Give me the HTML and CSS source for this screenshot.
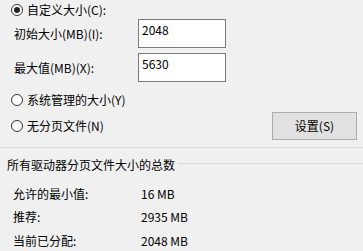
FILE: index.html
```html
<!DOCTYPE html>
<html lang="zh-CN">
<head>
<meta charset="utf-8">
<link rel="stylesheet" href="styles.css">
</head>
<body>
<div class="page">
  <div class="row r1">
    <span class="radio checked"></span><span class="rlabel">自定义大小(C):</span>
  </div>
  <div class="row r2">
    <span class="flabel">初始大小(MB)(I):</span><div class="input">2048</div>
  </div>
  <div class="row r3">
    <span class="flabel">最大值(MB)(X):</span><div class="input">5630</div>
  </div>
  <div class="row r4">
    <span class="radio"></span><span class="rlabel">系统管理的大小(Y)</span>
  </div>
  <div class="row r5">
    <span class="radio"></span><span class="rlabel">无分页文件(N)</span>
    <div class="spacer"></div>
    <div class="button">设置(S)</div>
  </div>
  <div class="sep"></div>
  <div class="group-title"><span class="gt">所有驱动器分页文件大小的总数</span><span class="gline"></span></div>
  <div class="stat s1"><span class="sk">允许的最小值:</span><span class="sv">16 MB</span></div>
  <div class="stat s2"><span class="sk">推荐:</span><span class="sv">2935 MB</span></div>
  <div class="stat s3"><span class="sk">当前已分配:</span><span class="sv">2048 MB</span></div>
</div>
</body>
</html>
```

FILE: styles.css
```css
html, body {
  margin: 0;
  padding: 0;
  background: #f0f0f0;
}
body {
  font-family: "Noto Sans CJK SC", "Noto Sans", sans-serif;
  font-size: 12px;
  color: #000;
  width: 363px;
  height: 251px;
  overflow: hidden;
}
.page {
  display: flex;
  flex-direction: column;
}
.row {
  display: flex;
  align-items: center;
}
.r1 { height: 19px; padding-left: 11px; }
.r2 { height: 29px; }
.r3 { height: 29px; margin-top: 5px; }
.r4 { height: 20px; margin-top: 8px; padding-left: 11px; }
.r5 { height: 28px; margin-top: 2px; padding-left: 11px; padding-right: 6px; }
.radio {
  box-sizing: border-box;
  width: 12px;
  height: 12px;
  border: 1px solid #333;
  border-radius: 50%;
  background: #fff;
  display: flex;
  align-items: center;
  justify-content: center;
  flex: none;
}
.radio.checked::after {
  content: "";
  width: 6px;
  height: 6px;
  border-radius: 50%;
  background: #222;
}
.rlabel {
  margin-left: 4px;
  line-height: 16px;
}
.flabel {
  width: 138px;
  padding-left: 14px;
  box-sizing: border-box;
  line-height: 16px;
  flex: none;
}
.input {
  box-sizing: border-box;
  width: 88px;
  height: 29px;
  border: 1px solid #7a7a7a;
  background: #fff;
  padding: 2px 3px;
  line-height: 16px;
  align-self: stretch;
}
.spacer { flex: 1; }
.button {
  box-sizing: border-box;
  width: 85px;
  height: 28px;
  border: 1px solid #adadad;
  background: #e1e1e1;
  display: flex;
  align-items: center;
  justify-content: center;
  line-height: 16px;
}
.sep {
  height: 1px;
  background: #d9d9d9;
  margin-top: 7px;
}
.group-title {
  display: flex;
  align-items: center;
  height: 16px;
  margin-top: 9px;
  padding-left: 7px;
}
.gt {
  line-height: 16px;
  flex: none;
}
.gline {
  flex: 1;
  height: 1px;
  background: #d9d9d9;
  margin-left: 3px;
  margin-top: -3px;
}
.stat {
  display: flex;
  align-items: center;
  height: 16px;
  line-height: 16px;
}
.s1 { margin-top: 13px; }
.s2 { margin-top: 7px; }
.s3 { margin-top: 8px; }
.sk {
  width: 141px;
  padding-left: 13px;
  box-sizing: border-box;
  flex: none;
}
```
